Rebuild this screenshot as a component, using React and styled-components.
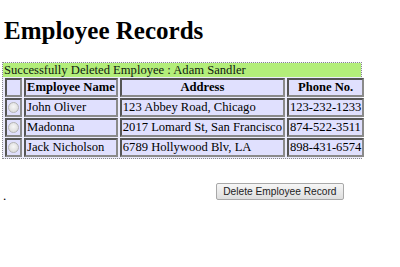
import React from "react";
import styled, { createGlobalStyle } from "styled-components";

const Global = createGlobalStyle`
  html, body { margin: 0; padding: 0; background: #ffffff; }
  body { font-family: "Liberation Serif", "Times New Roman", serif; color: #000; }
`;

const Page = styled.div`
  padding: 0 0 0 2px;
`;

const Title = styled.h1`
  margin: 16px 0 0 2px;
  font-size: 25px;
  line-height: 30px;
  font-weight: bold;
  font-family: "Liberation Serif", serif;
`;

const Panel = styled.div`
  margin-top: 16px;
  width: 358px;
  border: 1px dotted #8a8a8a;
  background: #ececfc;
`;

const Banner = styled.div`
  background: #b3ee7a;
  color: #102010;
  font-size: 12.6px;
  line-height: 14px;
  height: 14px;
  padding: 0 0 0 1px;
`;

const Grid = styled.table`
  border-collapse: separate;
  border-spacing: 2px 1px;
  font-size: 12.6px;
  font-family: "Liberation Serif", serif;
`;

const Cell = styled.td`
  background: #e0e0fe;
  border: 2px solid;
  border-color: #555 #8a8a8a #8a8a8a #555;
  height: 15px;
  line-height: 15px;
  padding: 0 1px;
  box-sizing: content-box;
  width: ${(p) => p.$w}px;
  white-space: nowrap;
  text-align: ${(p) => (p.$center ? "center" : "left")};
  font-weight: ${(p) => (p.$head ? "bold" : "normal")};
`;

const Radio = styled.span`
  display: inline-block;
  width: 11px;
  height: 11px;
  margin-top: 2px;
  border-radius: 50%;
  border: 1px solid #b4b4b4;
  background: radial-gradient(circle at 50% 40%, #f6f6f6, #d4d4d4);
  vertical-align: top;
  box-sizing: border-box;
`;

const Footer = styled.div`
  display: flex;
  align-items: flex-end;
  margin-top: 24px;
  padding-left: 1px;
`;

const Dot = styled.span`
  font-size: 13px;
  line-height: 13px;
  margin-bottom: -2px;
`;

const Button = styled.button`
  margin-left: 210px;
  font-family: "Liberation Sans", Arial, sans-serif;
  font-size: 10.2px;
  line-height: 13px;
  height: 17px;
  padding: 0 6px;
  color: #222;
  background: linear-gradient(#f6f6f6, #dedede);
  border: 1px solid #a8a8a8;
  border-radius: 2px;
`;

const rows = [
  ["John Oliver", "123 Abbey Road, Chicago", "123-232-1233"],
  ["Madonna", "2017 Lomard St, San Francisco", "874-522-3511"],
  ["Jack Nicholson", "6789 Hollywood Blv, LA", "898-431-6574"],
];

export default function App() {
  return (
    <>
      <Global />
      <Page>
        <Title>Employee Records</Title>
        <Panel>
          <Banner>Successfully Deleted Employee : Adam Sandler</Banner>
          <Grid>
            <tbody>
              <tr>
                <Cell $w={15}></Cell>
                <Cell $w={85} $head $center>Employee Name</Cell>
                <Cell $w={158} $head $center>Address</Cell>
                <Cell $w={67} $head $center>Phone No.</Cell>
              </tr>
              {rows.map((r) => (
                <tr key={r[0]}>
                  <Cell $w={15} $center><Radio /></Cell>
                  <Cell $w={85}>{r[0]}</Cell>
                  <Cell $w={158}>{r[1]}</Cell>
                  <Cell $w={67}>{r[2]}</Cell>
                </tr>
              ))}
            </tbody>
          </Grid>
        </Panel>
        <Footer>
          <Dot>.</Dot>
          <Button>Delete Employee Record</Button>
        </Footer>
      </Page>
    </>
  );
}
